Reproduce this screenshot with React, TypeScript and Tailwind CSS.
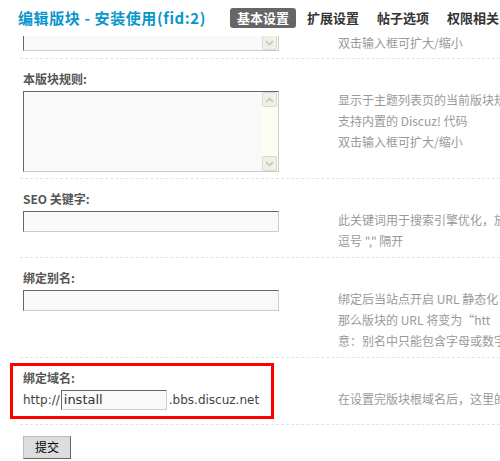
import React from 'react';

const Chevron = ({ up }: { up?: boolean }) => (
  <svg width="9" height="6" viewBox="0 0 9 6">
    <path
      d={up ? 'M1 5 L4.5 1.5 L8 5' : 'M1 1 L4.5 4.5 L8 1'}
      fill="none"
      stroke="#c9c6b6"
      strokeWidth="1.6"
    />
  </svg>
);

const ScrollButton = ({ up }: { up?: boolean }) => (
  <div className="flex h-[15px] w-[15px] items-center justify-center rounded-[2px] border border-[#dcdace] bg-[#f1f0e8]">
    <Chevron up={up} />
  </div>
);

const TextArea = () => (
  <div className="relative h-[81px] w-[256px] border border-t-[#666] border-l-[#666] border-r-[#ccc] border-b-[#ccc] bg-[#f9f9f9]">
    <div className="absolute right-0 top-0 flex h-full w-[16px] flex-col justify-between bg-[#fdfdf4]">
      <ScrollButton up />
      <ScrollButton />
    </div>
  </div>
);

const Input = () => (
  <div className="h-[21px] w-[256px] border border-t-[#666] border-l-[#666] border-r-[#ccc] border-b-[#ccc] bg-[#f9f9f9]" />
);

const Label = ({ children }: { children: React.ReactNode }) => (
  <div className="h-[32px] pl-[3px] pt-[6px]">
    <span className="text-[12px] font-bold leading-[14px] text-[#555]">{children}</span>
  </div>
);

const Tips = ({ lines }: { lines: string[] }) => (
  <div className="mt-[-2px] min-w-0 whitespace-nowrap text-[12px] leading-[21px] text-[#999]">
    {lines.map((line) => (
      <div key={line}>{line}</div>
    ))}
  </div>
);

const Header = () => {
  const tabs = ['扩展设置', '帖子选项', '权限相关'];
  return (
    <div className="flex h-[36px] items-center pl-[18px] whitespace-nowrap">
      <h1 className="w-[192px] shrink-0 text-[15px] font-bold tracking-[0.6px] text-[#0a96cc]">
        编辑版块 - 安装使用(fid:2)
      </h1>
      <div className="ml-[20px] flex items-center gap-[4px]">
        <span className="flex h-[20px] items-center rounded-[3px] bg-[#666] px-[7px] text-[13px] font-bold text-white">
          基本设置
        </span>
        {tabs.map((tab) => (
          <span key={tab} className="px-[7px] text-[13px] font-bold text-[#333]">
            {tab}
          </span>
        ))}
      </div>
    </div>
  );
};

const App = () => {
  return (
    <div className="h-[461px] w-[500px] overflow-hidden bg-white font-['Noto_Sans_CJK_SC',sans-serif]">
      <Header />
      <div className="ml-[20px]">
        <div className="flex h-[22px] overflow-hidden">
          <div className="w-[318px] shrink-0 pl-[3px]">
            <div className="mt-[-66px]">
              <TextArea />
            </div>
          </div>
          <div className="mt-[-4px] whitespace-nowrap text-[12px] leading-[22px] text-[#999]">
            双击输入框可扩大/缩小
          </div>
        </div>

        <div className="border-t border-dashed border-[#d3e8f7]">
          <Label>本版块规则:</Label>
          <div className="flex h-[87px]">
            <div className="w-[318px] shrink-0 pl-[3px]">
              <TextArea />
            </div>
            <Tips
              lines={[
                '显示于主题列表页的当前版块规',
                '支持内置的 Discuz! 代码',
                '双击输入框可扩大/缩小',
              ]}
            />
          </div>
        </div>

        <div className="border-t border-dashed border-[#d3e8f7]">
          <Label>SEO 关键字:</Label>
          <div className="flex h-[46px]">
            <div className="w-[318px] shrink-0 pl-[3px]">
              <Input />
            </div>
            <Tips lines={['此关键词用于搜索引擎优化，放', '逗号 "," 隔开']} />
          </div>
        </div>

        <div className="border-t border-dashed border-[#d3e8f7]">
          <Label>绑定别名:</Label>
          <div className="flex h-[67px]">
            <div className="w-[318px] shrink-0 pl-[3px]">
              <Input />
            </div>
            <Tips
              lines={[
                '绑定后当站点开启 URL 静态化',
                '那么版块的 URL 将变为“htt',
                '意：别名中只能包含字母或数字',
              ]}
            />
          </div>
        </div>

        <div className="relative border-t border-dashed border-[#d3e8f7]">
          <Label>绑定域名:</Label>
          <div className="flex h-[34px]">
            <div className="flex w-[318px] shrink-0 items-start pl-[3px] font-['DejaVu_Sans',sans-serif] text-[12px] text-[#444]">
              <span className="leading-[20px]">http://</span>
              <div className="ml-[1px] h-[20px] w-[106px] border border-t-[#666] border-l-[#666] border-r-[#ccc] border-b-[#ccc] bg-[#f9f9f9] pl-[2px] text-[13px] leading-[18px] text-[#333]">
                install
              </div>
              <span className="ml-[2px] leading-[20px]">.bbs.discuz.net</span>
            </div>
            <Tips lines={['在设置完版块根域名后，这里的']} />
          </div>
          <div className="absolute left-[-10px] top-[5px] h-[56px] w-[264px] border-[3px] border-[#f00]" />
        </div>

        <div className="border-t border-dashed border-[#d3e8f7] pl-[3px] pt-[8px]">
          <button className="h-[23px] w-[48px] border border-t-[#bbb] border-l-[#bbb] border-r-[#666] border-b-[#666] bg-[#ddd] text-[12px] text-black">
            提交
          </button>
        </div>
      </div>
    </div>
  );
};

export default App;
